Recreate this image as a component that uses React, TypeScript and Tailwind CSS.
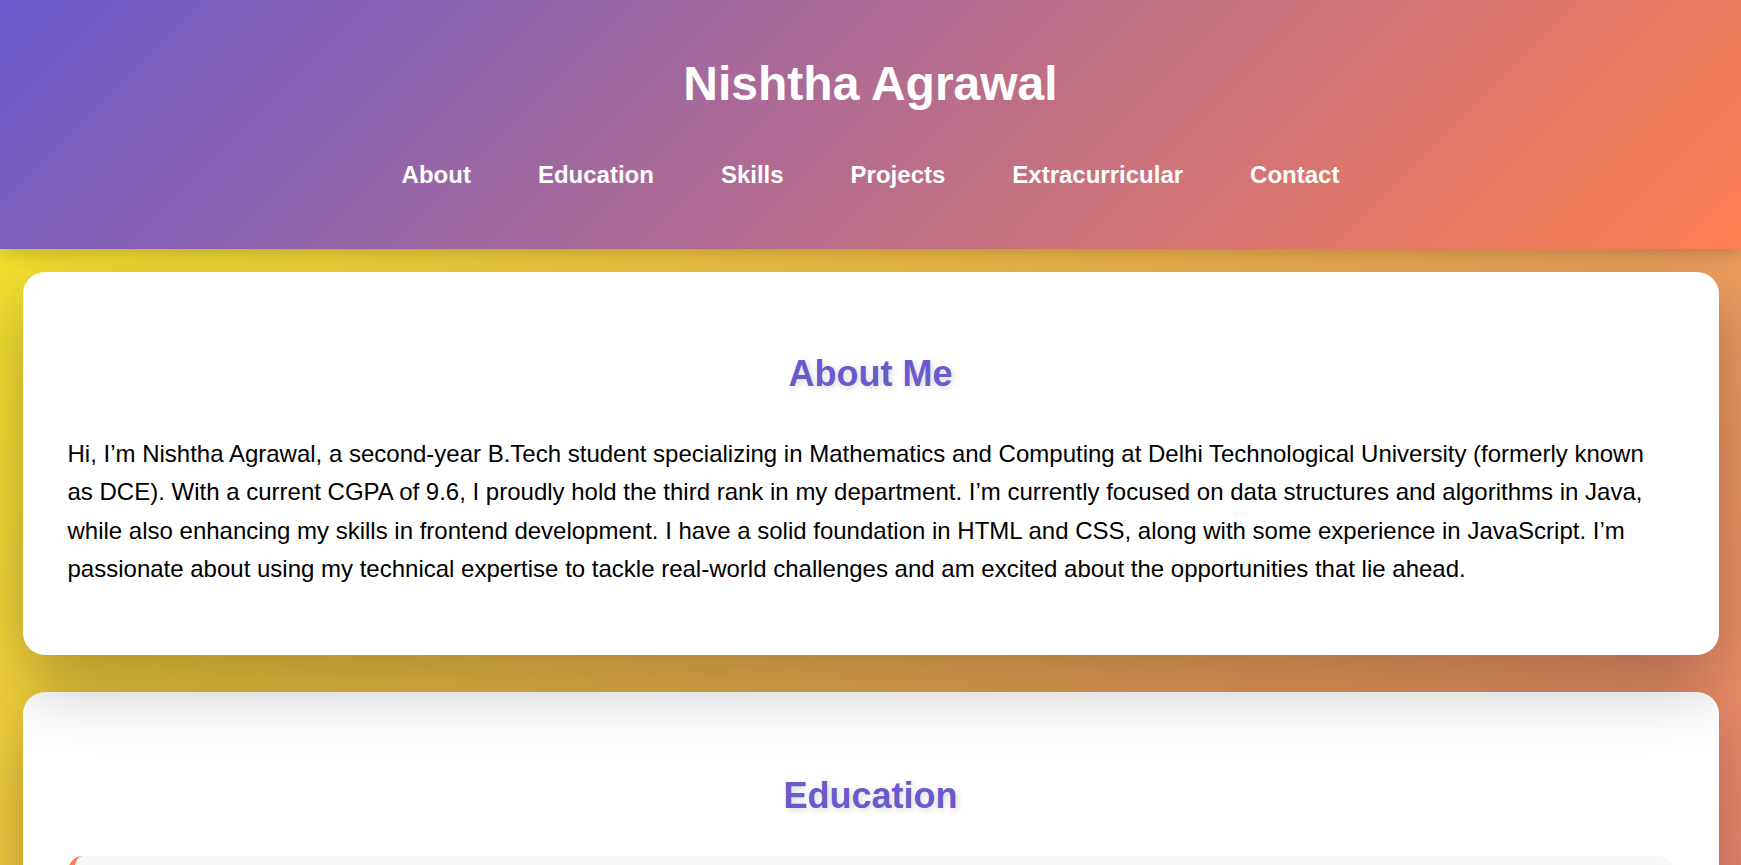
import React from 'react';

const navLinks = ['About', 'Education', 'Skills', 'Projects', 'Extracurricular', 'Contact'];

const education = [
  {
    school: 'Delhi Technological University',
    degree: 'B.Tech in Mathematics and Computing',
    detail: 'CGPA: 9.6 (Rank 3 in department)',
  },
  {
    school: 'Senior Secondary School',
    degree: 'Class XII (CBSE)',
    detail: 'Science with Mathematics',
  },
];

const App: React.FC = () => {
  return (
    <div className="min-h-screen bg-fixed bg-[linear-gradient(135deg,#f6ee28,#ee8770)] font-['Liberation_Sans',Arial,sans-serif]">
      {/* Header */}
      <header className="relative z-20 bg-[linear-gradient(135deg,#6a5acd,#ff7f50)] pt-[56px] pb-[60px] text-center text-white shadow-[0_4px_18px_rgba(0,0,0,0.22)]">
        <h1 className="text-[48px] font-bold leading-[55px]">Nishtha Agrawal</h1>
        <nav className="mt-[50px] flex justify-center gap-[67px]">
          {navLinks.map((link) => (
            <a key={link} href={`#${link.toLowerCase()}`} className="text-[24px] font-bold leading-[28px] text-white">
              {link}
            </a>
          ))}
        </nav>
      </header>

      <main className="flex flex-col gap-[37.5px] px-[22.5px] pt-[23px] pb-[40px]">
        {/* About */}
        <section id="about" className="relative z-10 rounded-[22px] bg-white px-[45px] pt-[45px] pb-[42px] shadow-[0_25px_70px_rgba(0,0,0,0.3)]">
          <h2 className="mt-[36px] mb-[41px] text-center text-[36px] font-bold leading-[41px] text-[#6a5acd] [text-shadow:2px_2px_6px_rgba(0,0,0,0.15)]">
            About Me
          </h2>
          <p className="mb-[24px] text-[24px] leading-[38.4px] text-black">
            Hi, I’m Nishtha Agrawal, a second-year B.Tech student specializing in Mathematics and Computing at Delhi Technological University (formerly known as DCE). With a current CGPA of 9.6, I proudly hold the third rank in my department. I’m currently focused on data structures and algorithms in Java, while also enhancing my skills in frontend development. I have a solid foundation in HTML and CSS, along with some experience in JavaScript. I’m passionate about using my technical expertise to tackle real-world challenges and am excited about the opportunities that lie ahead.
          </p>
        </section>

        {/* Education */}
        <section id="education" className="rounded-[22px] bg-white px-[45px] pt-[45px] pb-[42px] shadow-[0_25px_70px_rgba(0,0,0,0.3)]">
          <h2 className="mt-[38px] mb-[40px] text-center text-[36px] font-bold leading-[41px] text-[#6a5acd] [text-shadow:2px_2px_6px_rgba(0,0,0,0.15)]">
            Education
          </h2>
          <div className="flex flex-col gap-[30px]">
            {education.map((item) => (
              <div key={item.school} className="rounded-[15px] border-l-[6px] border-[#ff7f50] bg-[#f8f8f8] px-[30px] py-[24px]">
                <h3 className="text-[27px] font-bold text-[#333]">{item.school}</h3>
                <p className="mt-2 text-[24px] text-black">{item.degree}</p>
                <p className="mt-1 text-[22px] text-[#555]">{item.detail}</p>
              </div>
            ))}
          </div>
        </section>
      </main>
    </div>
  );
};

export default App;
